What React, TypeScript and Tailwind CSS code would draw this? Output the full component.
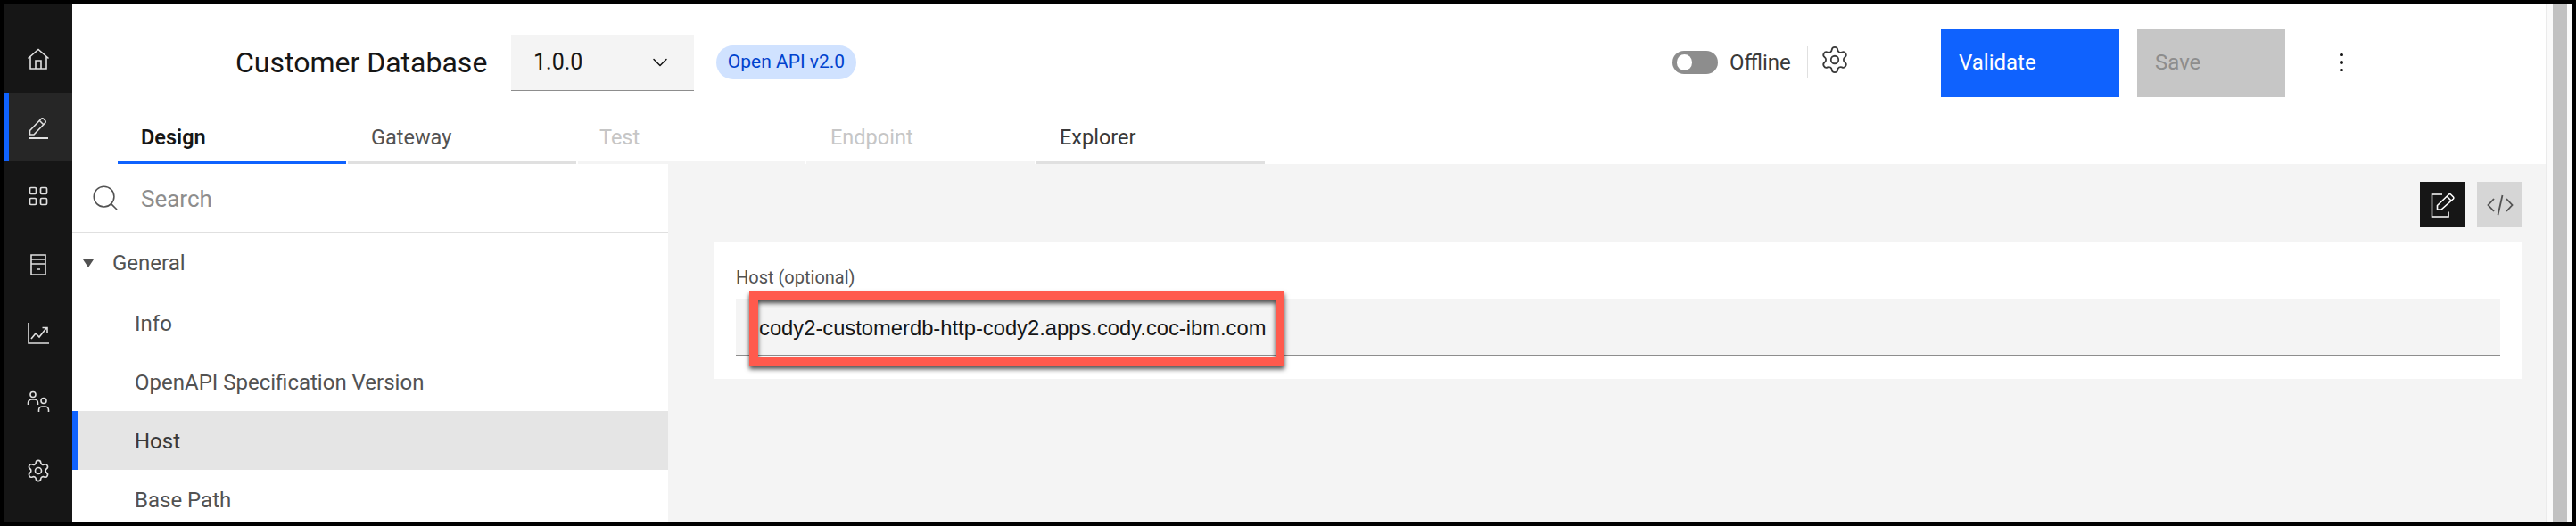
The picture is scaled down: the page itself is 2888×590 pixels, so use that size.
import { Settings, ChevronDown, Search } from "lucide-react";

const railIcon = "w-[26px] h-[26px] text-[#e0e0e0]";

function HomeIcon() {
  return (
    <svg className={railIcon} viewBox="0 0 26 26" fill="none" stroke="currentColor" strokeWidth="1.6">
      <path d="M1.5 12.5 13 2.5l11.5 10M4 10.5V24h18V10.5M10 24v-9h6v9" />
    </svg>
  );
}

function PencilIcon() {
  return (
    <svg className={railIcon} viewBox="0 0 26 26" fill="none" stroke="currentColor" strokeWidth="1.6">
      <path d="M2 25h22" strokeWidth="2" />
      <path d="M3.5 21v-4.5L16 3.5a2 2 0 0 1 3 0l1.5 1.5a2 2 0 0 1 0 3L8 21zM14.5 5.5l4.5 4.5" />
    </svg>
  );
}

function AppsIcon() {
  return (
    <svg className={railIcon} viewBox="0 0 26 26" fill="none" stroke="currentColor" strokeWidth="1.7">
      <rect x="3.5" y="3.5" width="7" height="7" rx="1.2" />
      <rect x="15.5" y="3.5" width="7" height="7" rx="1.2" />
      <rect x="3.5" y="15.5" width="7" height="7" rx="1.2" />
      <rect x="15.5" y="15.5" width="7" height="7" rx="1.2" />
    </svg>
  );
}

function ServerIcon() {
  return (
    <svg className={railIcon} viewBox="0 0 26 26" fill="none" stroke="currentColor" strokeWidth="1.6">
      <path d="M5 2h16v22H5zM5 7h16M5 12h16M11 18h4" />
    </svg>
  );
}

function ChartIcon() {
  return (
    <svg className={railIcon} viewBox="0 0 26 26" fill="none" stroke="currentColor" strokeWidth="1.6">
      <path d="M2 1v23h23M5 19l5-6 4 4 8-10M17.5 6.5H23V12" />
    </svg>
  );
}

function UsersIcon() {
  return (
    <svg className="w-[26px] h-[26px] text-[#e0e0e0]" viewBox="0 0 26 26" fill="none" stroke="currentColor" strokeWidth="1.6">
      <circle cx="7" cy="4.5" r="3" />
      <path d="M1.5 16v-2a4 4 0 0 1 4-4h3a4 4 0 0 1 4 4v2" />
      <circle cx="19" cy="11.5" r="3" />
      <path d="M13.5 24v-2a4 4 0 0 1 4-4h3a4 4 0 0 1 4 4v2" />
    </svg>
  );
}

function EditIcon() {
  return (
    <svg className="w-[28px] h-[28px] text-white" viewBox="0 0 28 28" fill="none" stroke="currentColor" strokeWidth="1.6">
      <path d="M13 2H1.5v25H20v-5.5" />
      <path d="M7.5 19v-4.5L20.5 2a1.5 1.5 0 0 1 2 0l3 3a1.5 1.5 0 0 1 0 2L12 19zM18.5 4.5l5 5" />
    </svg>
  );
}

function CodeIcon() {
  return (
    <svg className="w-[30px] h-[24px] text-[#525252]" viewBox="0 0 30 24" fill="none" stroke="currentColor" strokeWidth="1.8">
      <path d="M8 5 1.5 12 8 19M22 5l6.5 7-6.5 7M17.5 1l-5 22" />
    </svg>
  );
}

const rail = [HomeIcon, PencilIcon, AppsIcon, ServerIcon, ChartIcon, UsersIcon];

const tabs = [
  { label: "Design", cls: "w-[256px] pl-[26px] border-[#0f62fe] text-[#161616] font-semibold" },
  { label: "Gateway", cls: "w-[256px] pl-[26px] border-[#e0e0e0] text-[#525252]" },
  { label: "Test", cls: "w-[254px] pl-[24px] border-[#f4f4f4] text-[#c6c6c6]" },
  { label: "Endpoint", cls: "w-[256px] pl-[27px] border-[#f4f4f4] text-[#c6c6c6]" },
  { label: "Explorer", cls: "w-[256px] pl-[26px] border-[#e0e0e0] text-[#393939]" },
];

const navItems = ["Info", "OpenAPI Specification Version", "Host", "Base Path"];

export default function App() {
  return (
    <div className="w-[2888px] h-[590px] bg-black p-[4px] flex overflow-hidden font-[Roboto,sans-serif]">
      {/* rail */}
      <aside className="w-[77px] shrink-0 bg-[#161616] pt-[23px] flex flex-col">
        {rail.map((Icon, i) => (
          <div
            key={i}
            className={
              i === 1
                ? "h-[77px] flex items-center justify-center bg-[#262626] border-l-[6px] border-[#0f62fe] pr-[6px]"
                : "h-[77px] flex items-center justify-center"
            }
          >
            <Icon />
          </div>
        ))}
        <div className="h-[77px] flex items-center justify-center">
          <Settings className="w-[28px] h-[28px] text-[#e0e0e0]" strokeWidth={1.4} />
        </div>
      </aside>

      <div className="flex-1 min-w-0 flex flex-col bg-white">
        {/* top bar */}
        <div className="h-[132px] shrink-0 flex items-center">
          <h1 className="ml-[183px] w-[309px] text-[32px] leading-none text-[#161616]">Customer Database</h1>
          <div className="w-[205px] h-[63px] bg-[#f4f4f4] border-b border-[#8d8d8d] flex items-center justify-between pl-[25px] pr-[24px]">
            <span className="text-[25px] text-[#161616]">1.0.0</span>
            <ChevronDown className="w-[28px] h-[28px] text-[#161616]" strokeWidth={1.3} />
          </div>
          <span className="ml-[25px] w-[157px] h-[38px] rounded-full bg-[#d0e2ff] text-[#0043ce] text-[21px] flex items-center justify-center">
            Open API v2.0
          </span>

          <div className="ml-[915px] w-[51px] h-[26px] rounded-full bg-[#8d8d8d] flex items-center pl-[5px]">
            <span className="w-[17px] h-[18px] rounded-full bg-white" />
          </div>
          <span className="ml-[13px] w-[87px] text-[24px] text-[#393939]">Offline</span>
          <div className="w-px h-[36px] bg-[#e0e0e0]" />
          <Settings className="ml-[13px] w-[34px] h-[34px] text-[#393939] -translate-y-[3px]" strokeWidth={1.25} />
          <button className="ml-[102px] w-[200px] h-[77px] bg-[#0f62fe] text-white text-[24px] text-left pl-[20px]">Validate</button>
          <button className="ml-[20px] w-[166px] h-[77px] bg-[#c6c6c6] text-[#8d8d8d] text-[24px] text-left pl-[20px]">Save</button>
          <div className="ml-[61px] flex flex-col gap-[5px]">
            <span className="w-[3.5px] h-[3.5px] rounded-full bg-[#161616]" />
            <span className="w-[3.5px] h-[3.5px] rounded-full bg-[#161616]" />
            <span className="w-[3.5px] h-[3.5px] rounded-full bg-[#161616]" />
          </div>
        </div>

        {/* tabs */}
        <div className="h-[48px] shrink-0 flex gap-[2px] pl-[51px]">
          {tabs.map((t) => (
            <div key={t.label} className={`h-full border-b-[3px] pb-[7px] flex items-center text-[23.5px] ${t.cls}`}>
              {t.label}
            </div>
          ))}
        </div>

        {/* body */}
        <div className="flex-1 min-h-0 flex">
          <nav className="w-[668px] shrink-0 bg-white overflow-hidden">
            <div className="h-[77px] border-b border-[#e0e0e0] flex items-center pl-[20px] gap-[23px]">
              <Search className="w-[34px] h-[34px] text-[#525252]" strokeWidth={1.1} />
              <span className="pt-[2px] text-[26px] text-[#8d8d8d]">Search</span>
            </div>
            <div className="h-[68px] flex items-center pl-[12px] text-[24px] text-[#525252]">
              <span className="w-0 h-0 border-x-[6px] border-x-transparent border-t-[9px] border-t-[#525252] mr-[21px]" />
              General
            </div>
            {navItems.map((item) =>
              item === "Host" ? (
                <div key={item} className="h-[66px] flex items-center pl-[64px] pt-[1px] bg-[#e5e5e5] border-l-[6px] border-[#0f62fe] text-[24px] text-[#393939]">
                  {item}
                </div>
              ) : (
                <div key={item} className="h-[66px] flex items-center pl-[70px] pt-[1px] text-[24px] text-[#525252]">
                  {item}
                </div>
              )
            )}
          </nav>

          <main className="flex-1 min-w-0 bg-[#f4f4f4] pt-[20px] pl-[51px] pr-[26px]">
            <div className="flex justify-end gap-[13px]">
              <div className="w-[51px] h-[51px] bg-[#161616] flex items-center justify-center">
                <EditIcon />
              </div>
              <div className="w-[51px] h-[51px] bg-[#d6d6d6] flex items-center justify-center">
                <CodeIcon />
              </div>
            </div>
            <div className="mt-[16px] h-[154px] bg-white px-[25px] pt-[27px]">
              <div className="h-[37px] text-[20px] leading-[26px] text-[#525252]">Host (optional)</div>
              <div className="relative h-[64px] bg-[#f4f4f4] border-b border-[#8d8d8d] flex items-center pl-[26px] pt-[2px] text-[23.75px] text-[#161616] font-['Liberation_Sans',sans-serif]">
                cody2-customerdb-http-cody2.apps.cody.coc-ibm.com
                <div className="absolute left-[15px] -top-[9px] w-[600px] h-[84px] border-[10px] border-[#ff5a4d] shadow-[0_4px_5px_rgba(0,0,0,0.7),inset_0_4px_5px_rgba(0,0,0,0.7)]" />
              </div>
            </div>
          </main>
        </div>
      </div>

      {/* page scrollbar */}
      <div className="w-[30px] shrink-0 bg-[#fafafa] border-l-2 border-[#ebebeb] pl-[6px] pr-[6px]">
        <div className="w-[16px] h-full bg-[#c1c1c1]" />
      </div>
    </div>
  );
}
